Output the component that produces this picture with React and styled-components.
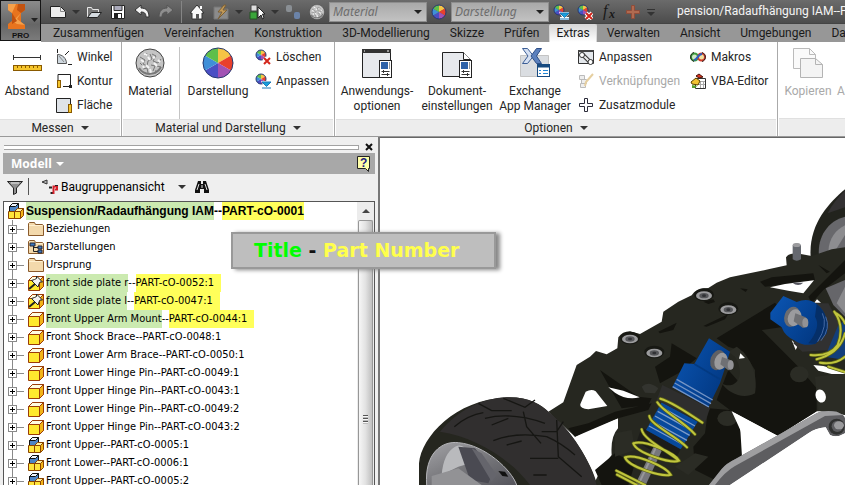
import React from 'react';
import styled, { createGlobalStyle, css } from 'styled-components';

const Global = createGlobalStyle`
  * { box-sizing: border-box; }
  body { margin: 0; font: 12px/15px Roboto, "Liberation Sans", sans-serif; color: #262626; background: #fff; overflow: hidden; }
  button { font: inherit; color: inherit; background: none; border: 0; padding: 0; margin: 0; white-space: nowrap; }
  svg { display: block; flex: none; }
`;

/* ---------- frame ---------- */
const Window = styled.div`
  position: relative;
  display: flex;
  flex-direction: column;
  height: 100vh;
  overflow: hidden;
`;
const Header = styled.header`
  display: flex;
  flex: none;
`;
const AppButton = styled.button`
  flex: none;
  width: 41px;
  height: 41px;
  border: 1px solid #151515;
  background: linear-gradient(#8b8b8b, #666 60%, #7b7b7b);
`;
const HeaderRows = styled.div`
  flex: 1;
  min-width: 0;
  background: #979797;
`;
const QuickBar = styled.div`
  display: flex;
  align-items: center;
  height: 24px;
  padding-left: 5px;
  overflow: hidden;
  background: linear-gradient(#6b6b6b, #4c4c4c);
  border-bottom: 1px solid #444;
`;
const QuickButton = styled.button`
  flex: none;
  display: grid;
  place-items: center;
  width: ${p => (p.$narrow ? 12 : 24)}px;
  height: 22px;
`;
const QuickRule = styled.span`
  flex: none;
  width: 1px;
  height: 22px;
  margin: 0 3px;
  background: #858585;
`;
const Caret = styled.span`
  display: inline-block;
  flex: none;
  border: 4px solid transparent;
  border-top-color: ${p => p.$color || '#333'};
  border-bottom-width: 0;
`;
const Combo = styled.span`
  flex: none;
  display: grid;
  align-items: center;
  width: 98px;
  height: 20px;
  border: 1px solid #8e8e8e;
  background: linear-gradient(#a9a9a9, #c2c2c2);
  &::after {
    content: "";
    grid-area: 1 / 1;
    justify-self: end;
    margin-right: 4px;
    border: 4px solid transparent;
    border-top-color: #222;
    border-bottom-width: 0;
    pointer-events: none;
  }
`;
const ComboSelect = styled.select`
  grid-area: 1 / 1;
  appearance: none;
  width: 100%;
  border: 0;
  padding: 0 3px;
  background: none;
  font: italic 12px/16px "Noto Sans", sans-serif;
  color: #6d6d6d;
`;
const DocTitle = styled.div`
  flex: 1;
  min-width: 0;
  margin-left: 20px;
  overflow: hidden;
  white-space: nowrap;
  color: #f4f4f4;
`;
const Tabs = styled.nav`
  display: flex;
  height: 18px;
  padding-left: 2px;
  overflow: hidden;
  background: #979797;
`;
const Tab = styled.button`
  flex: none;
  height: 18px;
  padding: 0 10px;
  color: #1a1a1a;
  ${p => p.$active && css`
    padding: 0 6px;
    background: linear-gradient(#d8d8d8, #fff);
    border: 1px solid #d8d8d8;
    border-bottom: 0;
    border-radius: 2px 2px 0 0;
  `}
`;

/* ---------- ribbon ---------- */
const Ribbon = styled.div`
  display: flex;
  flex: none;
  height: 95px;
  overflow: hidden;
  border-bottom: 1px solid #999;
`;
const Panel = styled.section`
  display: flex;
  flex-direction: column;
  flex: none;
  min-width: ${p => p.$min || 0}px;
  border-right: 1px solid #aaa;
  margin-right: 1px;
`;
const PanelBody = styled.div`
  flex: 1;
  display: flex;
  padding: 5px 4px 0 1px;
`;
const PanelTitle = styled.button`
  display: flex;
  align-items: center;
  justify-content: center;
  gap: 7px;
  height: 18px;
  margin-right: 1px;
  background: #ededed;
  border-top: 1px solid #e0e0e0;
`;
const BigButton = styled.button`
  display: flex;
  flex-direction: column;
  align-items: center;
  flex: none;
  width: ${p => p.$w}px;
  color: ${p => (p.$off ? '#a9a9a9' : 'inherit')};
  svg { height: 32px; margin-bottom: 5px; }
`;
const Stack = styled.div`
  display: flex;
  flex-direction: column;
  margin-left: ${p => p.$gap || 3}px;
`;
const SmallButton = styled.button`
  display: flex;
  align-items: center;
  gap: 5px;
  height: 24px;
  padding-bottom: 4px;
  color: ${p => (p.$off ? '#a9a9a9' : 'inherit')};
`;
const BodyRule = styled.span`
  width: 1px;
  height: 72px;
  margin: 0 4px 0 3px;
  background: #c4c4c4;
`;

/* ---------- browser ---------- */
const Body = styled.div`
  flex: 1;
  display: flex;
  min-height: 0;
`;
const Browser = styled.aside`
  display: flex;
  flex-direction: column;
  flex: none;
  width: 380px;
  padding: 4px 3px 0;
  background: #efefef;
  border-right: 2px solid #777;
  font-family: "DejaVu Sans Condensed", "DejaVu Sans", sans-serif;
  font-size: 11px;
`;
const GripRow = styled.div`
  display: flex;
  align-items: center;
  justify-content: space-between;
  height: 12px;
  padding: 0 2px 0 1px;
`;
const Grip = styled.span`
  flex: 1;
  height: 5px;
  margin-right: 6px;
  border: 1px solid #a2a2a2;
  border-left: 0;
  background: #fff;
`;
const BrowserTitle = styled.div`
  display: flex;
  align-items: center;
  justify-content: space-between;
  flex: none;
  height: 21px;
  padding: 0 4px 0 8px;
  background: #a8a8a8;
  color: #fff;
`;
const TitleButton = styled.button`
  display: flex;
  align-items: center;
  gap: 4px;
  font: bold 12px/16px "Noto Sans", sans-serif;
`;
const BrowserTools = styled.div`
  display: flex;
  align-items: center;
  flex: none;
  height: 27px;
  padding-left: 4px;
  padding-bottom: 2px;
`;
const ToolRule = styled.span`
  width: 1px;
  height: 17px;
  margin: 0 13px 0 5px;
  background: #555;
`;
const ViewButton = styled.button`
  display: flex;
  align-items: center;
  gap: 3px;
  margin-right: 8px;
  font: 12px/16px Roboto, sans-serif;
  color: #000;
  ${Caret} { margin-left: 10px; }
`;
const TreeBox = styled.div`
  flex: 1;
  display: flex;
  min-height: 0;
  background: #fff;
  border: 1px solid #555;
  border-bottom: 0;
`;
const Tree = styled.ul`
  flex: 1;
  margin: 0;
  padding: 0;
  list-style: none;
  overflow: hidden;
`;
const Row = styled.li`
  display: flex;
  align-items: center;
  height: 18px;
  white-space: nowrap;
  color: #000;
  ${p => p.$root && css`font: bold 12px/18px "Liberation Sans", sans-serif; padding-left: 4px;`}
`;
const Branch = styled.span`
  flex: none;
  display: flex;
  align-items: center;
  width: 24px;
  height: 18px;
  padding-left: 4px;
  background:
    linear-gradient(#8a8a8a, #8a8a8a) 8px 0 / 1px 100% no-repeat,
    linear-gradient(#8a8a8a, #8a8a8a) 8px 9px / 12px 1px no-repeat;
`;
const Expander = styled.button`
  width: 9px;
  height: 9px;
  border: 1px solid #8a8a8a;
  background:
    linear-gradient(#000, #000) center / 5px 1px no-repeat,
    linear-gradient(#000, #000) center / 1px 5px no-repeat,
    #fff;
`;
const Label = styled.span`
  padding-left: 2px;
  line-height: 18px;
`;
const Mark = styled.mark`
  display: inline-block;
  height: 18px;
  padding-right: ${p => (p.$tail ? 7 : 0)}px;
  color: #000;
  background: ${p => (p.$tail ? '#ffff5a' : '#cbeab0')};
  ${Row}:first-child & { padding-right: 0; }
`;
const Scrollbar = styled.div`
  display: flex;
  flex-direction: column;
  flex: none;
  width: 17px;
  background: #ececec;
`;
const ScrollUp = styled.button`
  display: grid;
  place-items: center;
  height: 18px;
  &::before { content: ""; border: 4px solid transparent; border-bottom-color: #444; border-top-width: 0; }
`;
const Thumb = styled.div`
  flex: 1;
  margin: 0 1px;
  padding: 194px 3px 0;
  border: 1px solid #979797;
  border-bottom: 0;
  border-radius: 2px 2px 0 0;
  background: linear-gradient(90deg, #f6f6f6, #e2e2e2 50%, #bfbfbf);
  &::before {
    content: "";
    display: block;
    height: 9px;
    margin: 0 1px;
    background: repeating-linear-gradient(#555 0 1px, #f8f8f8 1px 2px, #bbb 2px 3px);
  }
`;

/* ---------- viewport ---------- */
const Viewport = styled.main`
  flex: 1;
  min-width: 0;
  overflow: hidden;
  border-top: 1px solid #666;
  background: #fff;
`;
const Callout = styled.div`
  position: absolute;
  left: 231px;
  top: 232px;
  padding: 4px 35px 4px 21px;
  border: 2px solid #999;
  background: #bebebe;
  box-shadow: 4px 1px 4px #888;
  font: bold 19px/25px "DejaVu Sans", sans-serif;
  white-space: nowrap;
  color: #111;
`;
const Key = styled.span`color: ${p => p.$color};`;

/* ---------- icons ---------- */
const Icon = ({ s = 16, h, vb, children }) => (
  <svg width={s} height={h || s} viewBox={vb || `0 0 ${s} ${h || s}`} fill="none" aria-hidden="true">{children}</svg>
);
const SLICES = ['#f6c445', '#e9402c', '#a252b4', '#4a4fc4', '#3f8fd8', '#5fbf4a'];
const Wheel = ({ c, r }) => {
  const pt = a => `${c + r * Math.sin(a)} ${c - r * Math.cos(a)}`;
  return (
    <g>
      {SLICES.map((f, i) => (
        <path key={f} fill={f} d={`M${c} ${c}L${pt(((i + 0.5) * Math.PI) / 3 - Math.PI / 6)}A${r} ${r} 0 0 1 ${pt(((i + 1.5) * Math.PI) / 3 - Math.PI / 6)}Z`} />
      ))}
      <circle cx={c} cy={c} r={r} stroke="#27386e" />
    </g>
  );
};
const WheelIcon = ({ s = 16 }) => <Icon s={s}><Wheel c={s / 2} r={s / 2 - 1} /></Icon>;
const WheelClear = () => <Icon><Wheel c={6} r={5} /><path d="M9 9l6 6M15 9l-6 6" stroke="#fff" strokeWidth="4" /><path d="M9 9l6 6M15 9l-6 6" stroke="#d3261c" strokeWidth="2" /></Icon>;
const WheelAdjust = () => <Icon><Wheel c={6} r={5} /><path d="M6 8h10v2l-3 3h3v3H7v-3h2z" fill="#fff" /><path d="M7 9h9l-4.500 4.500z" fill="#18a0dc" stroke="#1878b8" /><path d="M7 15h9" stroke="#1878b8" /></Icon>;
const Sphere = ({ s = 30 }) => (
  <Icon s={s} vb="0 0 30 30">
    <circle cx="15" cy="15" r="14" fill="#c4c4c4" stroke="#444" />
    <path d="M5 9l5 3-2 4 4 2 1-5 4-2-2-5M8 21l4-1 1 5M17 6l4 2-3 5 5 2 3-4M16 17l4 1-2 5M22 18l4 1M5 15l2 2M21 22l-1 4M12 5l-2 3" stroke="#777" />
    <path d="M6 12l3 2M13 9l2 3M18 9l2 1M19 15l3 3M11 17l3 3M9 6l3 1M15 21l1 4M23 12l2 2M8 18l1 2" stroke="#f4f4f4" strokeWidth="2" />
    <path d="M4 20c5 8 17 8 22-1" stroke="#777" strokeWidth="2" />
  </Icon>
);
const Logo = () => (
  <Icon s={39}>
    <path d="M7 3h17v6l-4 3v9l4 3v4H7v-5l4-3v-8L7 9z" fill="#e8741e" />
    <path d="M7 3h8l-4 9-4-3zM20 12l-4 6 4 3 4 3-8-1-5-3 4-3z" fill="#f5a04a" /><path d="M17 3h7v6l-4 3-4-3zM11 12l5 8-5 3z" fill="#c2520f" />
    <path d="M30 17h7l-3.500 4z" fill="#222" />
    <text x="11" y="37" fontSize="8" fontWeight="bold" fontFamily="Liberation Sans" fill="#111">PRO</text>
  </Icon>
);
const NewIcon = () => <Icon><path d="M.5 2.500h10l5 5v6H.5z" fill="#eee" stroke="#222" /><path d="M10.500 2.500v5h5" stroke="#888" /></Icon>;
const OpenIcon = () => <Icon><path d="M1.500 13V3.500h4l1 2h6v3" stroke="#e8e8e8" fill="#777" /><path d="M1.500 13.500l4-5h10l-4 5z" fill="#d5dbe0" stroke="#222" /></Icon>;
const SaveIcon = () => <Icon><path d="M1.500 1.500h13v13h-13z" fill="#fff" stroke="#222" /><path d="M4 1.500h8v5H4z" fill="#aab" stroke="#333" /><path d="M4 9h8v6H4z" fill="#222" /><path d="M8 10h3v4H8z" fill="#fff" /></Icon>;
const UndoIcon = () => <Icon><path d="M1 6l6-5v3c5 0 8 3 8 9h-3c0-4-2-5-5-5v3z" fill="#f4f4f4" stroke="#333" /></Icon>;
const RedoIcon = () => <Icon><path d="M15 6L9 1v3c-5 0-8 3-8 9h3c0-4 2-5 5-5v3z" fill="#8e8e8e" stroke="#555" /></Icon>;
const HomeIcon = () => <Icon><path d="M1 9l7-8 7 8h-2v6H3V9z" fill="#f8f8f8" stroke="#333" /><path d="M7 10h3v5H7z" fill="#555" /><path d="M12 2v3" stroke="#fff" strokeWidth="2" /></Icon>;
const UpdateIcon = () => <Icon><path d="M1 3h7l2 2h5v10H1z" fill="#8b8b8b" stroke="#777" /><path d="M11 1L5 8h4l-4 7 9-9h-4l3-5z" fill="#c39a58" stroke="#7a6038" /></Icon>;
const SelectIcon = () => <Icon><path d="M2 1h6v6H2z" fill="#ddd" stroke="#444" /><path d="M1 8h7v7H1z" fill="#3aa53a" stroke="#225522" /><path d="M9 3v11l3-3 1.500 4 1.500-1-1.500-4H16z" fill="#fff" stroke="#222" /></Icon>;
const LinkIcon = () => <Icon><rect x="1" y="1" width="6" height="7" rx="2" fill="#8a8f94" /><rect x="9" y="8" width="6" height="7" rx="2" fill="#6b83a8" /></Icon>;
const DistanceIcon = () => <Icon s={30}><path d="M1 9.500h28M1.500 7v5M28.500 7v5" stroke="#333" /><rect x="1.500" y="17.500" width="28" height="5" fill="#f5c52c" stroke="#8a5a00" /><path d="M5.500 18v2M9.500 18v2M13.500 18v2M17.500 18v2M21.500 18v2M25.500 18v2" stroke="#8a5a00" /></Icon>;
const AngleIcon = () => <Icon><path d="M1.500 0v4M12 15.500h4M9 6l4-4" stroke="#222" /><path d="M1.500 5.500c5 0 9 4 9 9h-9z" fill="#cfd8df" stroke="#555" /><path d="M3 7l5 6" stroke="#888" /></Icon>;
const LoopIcon = () => <Icon><path d="M2 7V1.500h12.500v12H7" stroke="#222" /><rect x="1.500" y="7.500" width="3" height="7" fill="#f5c52c" stroke="#8a5a00" /><rect x="13" y="12" width="3" height="3" fill="#222" /></Icon>;
const AreaIcon = () => <Icon><path d="M.5 1.500h14v14H.5z" fill="#dfe3e8" stroke="#222" /><rect x="12.500" y="7.500" width="3" height="8" fill="#f5c52c" stroke="#8a5a00" /></Icon>;
const OptionSheet = () => (
  <g>
    <rect x="18.500" y="13.500" width="12" height="17" fill="#fff" stroke="#222" /><rect x="20" y="15" width="7" height="7" fill="#2e62a8" /><path d="M28.500 15v7" stroke="#999" />
    <path d="M20.500 24.500h8M20.500 27.500h8" stroke="#333" /><path d="M22.500 23v3M26.500 26v3" stroke="#333" />
  </g>
);
const AppOptionsIcon = () => <Icon s={32}><path d="M1.500 2.500h28v28h-28z" fill="#e7e9ed" stroke="#222" /><path d="M1 2h29v4H1z" fill="#333" /><path d="M3 4h1M26 4h2" stroke="#fff" /><OptionSheet /></Icon>;
const DocOptionsIcon = () => <Icon s={32}><path d="M1.500 5.500h21l7 7v17h-28z" fill="#e7e9ed" stroke="#222" /><path d="M22.500 5.500v7h7" fill="#fff" stroke="#222" /><OptionSheet /></Icon>;
const ExchangeIcon = () => (
  <Icon s={32}>
    <path d="M1.500 8.500h28v21h-28z" fill="#dadde1" stroke="#c4c4c4" />
    <path d="M3.500 1.500h5l6 7.500-6 7.500h-5L9 9z" fill="#d5e0f2" stroke="#3c5e96" /><path d="M22.500 1.500h-5L12 9l5.500 7.500h5L17.500 9z" fill="#5b80bd" stroke="#2e4f87" />
    <rect x="18.500" y="17.500" width="12" height="12" fill="#fff" stroke="#174a80" /><path d="M18 19h13" stroke="#174a80" strokeWidth="3" /><path d="M20 23.500h2M20 26.500h2M24 23.500h5M24 26.500h5" stroke="#2386d6" />
  </Icon>
);
const CustomizeIcon = () => <Icon><path d="M.5 1.500h15v13H.5z" fill="#e4e8ec" stroke="#333" /><path d="M0 2h16" stroke="#444" strokeWidth="2" /><path d="M4 5l8 8" stroke="#333" strokeWidth="4" /><path d="M4 5l8 8" stroke="#eee" strokeWidth="2" /><circle cx="4" cy="6" r="2.500" fill="#fff" stroke="#333" /><circle cx="12.500" cy="13" r="2.500" fill="#fff" stroke="#333" /></Icon>;
const LinksIcon = () => <Icon><path d="M1.500 2.500h5v4h-5zM3.500 6.500h5v4h-5zM2.500 10.500h5v4h-5z" fill="#eee" stroke="#bbb" /><path d="M15 1L8 9l-1 4" stroke="#e6cfa0" strokeWidth="2" /></Icon>;
const PlusIcon = ({ fill = '#fff', stroke = '#2c2c3a' }) => <Icon><path d="M6.500 1.500h3v5h5v3h-5v5h-3v-5h-5v-3h5z" fill={fill} stroke={stroke} /></Icon>;
const MacroIcon = () => <Icon><circle cx="4.500" cy="8" r="3.500" fill="#cfe8c8" stroke="#3c9a3c" strokeWidth="2" /><circle cx="11.500" cy="8" r="3.500" fill="#f0e0a0" stroke="#d23c2c" strokeWidth="2" /><path d="M4 11c3 0 4-6 8-6" stroke="#2c5fc0" strokeWidth="2" /><path d="M4 12.500c-5-2-4-8 0-9M12 3.500c5 2 4 8 0 9" stroke="#222" /></Icon>;
const VbaIcon = () => <Icon><path d="M5.500 5.500h10v10h-10z" fill="#fff" stroke="#333" /><path d="M7 8.500h8M7 11.500h8M10.500 8v7M13.500 8v7" stroke="#aaa" /><path d="M6 3l3-2 4 3-4 1z" fill="#d8321e" stroke="#4a1208" /><path d="M1 9l5-4 4 3-2 4-6-1z" fill="#f2c232" stroke="#5c4200" /><path d="M2 12l5 1-2 2H2z" fill="#58a030" /></Icon>;
const CopyIcon = () => <Icon s={30}><path d="M.5.5h16l6 6v14H.5z" fill="#fafafa" stroke="#bbb" /><path d="M16.500.5v6h6" stroke="#bbb" /><path d="M7.500 10.500h15l7 6v13h-22z" fill="#f4f4f4" stroke="#b4b4b4" /><path d="M22.500 10.500v6h7" stroke="#b4b4b4" /></Icon>;
const FilterIcon = () => <Icon><path d="M.5 2.500h15L9.500 9v5l-3 1.500V9z" fill="#8f8f8f" stroke="#222" /><path d="M4 4h8" stroke="#eee" /></Icon>;
const ViewIcon = () => <Icon><path d="M0 3l5-2v4z" fill="#bbb" stroke="#333" /><path d="M7 8.500h3M8.500 14h3" stroke="#222" strokeWidth="2" /><path d="M11.500 15V7.500H15v3h-2" stroke="#d4202a" strokeWidth="2" /><path d="M13 6.500h3" stroke="#222" /></Icon>;
const BinocularIcon = () => <Icon><path d="M4 2h3v3h2V2h3l3 9v3h-5v-4H6v4H1v-3z" fill="#111" /><path d="M5 5l-2 6M11 5l2 6M8 6v3" stroke="#ddd" /></Icon>;
const HelpIcon = () => <Icon s={14} h={16}><path d="M.5.5h12v12h-1v3l-3-3h-8z" fill="#ffffa8" stroke="#222" /><text x="3" y="11" fontSize="12" fontWeight="bold" fontFamily="Liberation Sans" fill="#1c1c80">?</text></Icon>;
const FolderIcon = ({ views }) => <Icon><path d="M.5 14.500v-12l1-1h5l1 2h7l1 1v10z" fill="#f3d9ac" stroke="#8a5a2c" /><path d="M1 4.500h13" stroke="#fff0d0" />{views && <g><path d="M5.500 6v6.500H10M5.500 8.500H10" stroke="#222" /><path d="M2 4h5v3H2zM10 7h4v3h-4zM10 11h4v3h-4z" fill="#3a78c0" stroke="#223" /></g>}</Icon>;
const Cube = () => <g><path d="M.5 5.500l4-4h11v10l-4 4H.5z" fill="#ffe92e" stroke="#9a3c08" /><path d="M.5 5.500l4-4h11l-4 4z" fill="#fffce0" stroke="#9a3c08" /><path d="M11.500 5.500l4-4v10l-4 4z" fill="#f2b418" stroke="#9a3c08" /></g>;
const PartIcon = () => <Icon><Cube /></Icon>;
const PinnedIcon = () => <Icon><Cube /><path d="M1 14l6-5" stroke="#222" strokeWidth="2" /><path d="M3.500 5.500l3-1 2-1V1l6 6h-2.500l-1 2-1 3z" fill="#f2f2f2" stroke="#222" /></Icon>;
const AssemblyIcon = () => (
  <Icon>
    <path d="M1.500 3.500l3-3h6v5l-3 3h-6z" fill="#4d84c4" stroke="#111" /><path d="M1.500 3.500l3-3h6l-3 3z" fill="#eef6ff" stroke="#111" />
    <path d="M10.500 8.500l2-3h3v7l-3 3" fill="#f2b418" stroke="#8a4400" />
    <path d="M.5 8.500h6v7h-6zM6.500 8.500h6v7h-6z" fill="#ffe53a" stroke="#8a4400" />
    <path d="M6.500 8.500l3-3h6l-3 3z" fill="#fff3a0" stroke="#8a4400" />
  </Icon>
);

/* ---------- suspension model ---------- */
const Bolt = ({ x, y }) => <g><ellipse cx={x} cy={y - 3} rx="30" ry="19" fill="#171813" /><ellipse cx={x} cy={y} rx="24" ry="13" fill="#9c9c9e" /><ellipse cx={x} cy={y} rx="14" ry="8" fill="#56575a" /><ellipse cx={x} cy={y} rx="6" ry="4" fill="#303134" /></g>;
const Coils = ({ d }) => <g fill="none" strokeLinecap="round"><path d={d} stroke="#5b6114" strokeWidth="10" /><path d={d} stroke="#c0c53e" strokeWidth="6" /></g>;
const Model = () => (
  <svg width="100%" height="100%" viewBox="-105 -96 1395 1041" preserveAspectRatio="xMinYMin slice" role="img" aria-label="Suspension">
    <defs>
      <linearGradient id="rim" x1="0" y1="0" x2="1" y2="1"><stop offset="0" stopColor="#a4a4a8" /><stop offset=".5" stopColor="#77777b" /><stop offset="1" stopColor="#55555c" /></linearGradient>
      <linearGradient id="blue" x1="0" y1="0" x2="1" y2=".6"><stop offset="0" stopColor="#0b56b4" /><stop offset="1" stopColor="#023882" /></linearGradient>
    </defs>
    {/* rear wheel */}
    <path d="M1290 58C1240 100 1180 165 1187 262L1215 300L1290 270Z" fill="#22231d" />
    <path d="M1290 62C1268 82 1250 105 1238 130L1290 112Z" fill="#333132" />
    <path d="M1290 140C1240 152 1206 200 1212 258L1290 240Z" fill="#68686c" />
    <path d="M1290 166C1262 180 1242 205 1240 245L1262 240L1290 195Z" fill="#8d8d90" />
    {/* chassis */}
    <path d="M400 725L445 697L485 585L525 560L543 543L575 553L607 535L610 502Q622 484 645 484L675 492L740 455L745 425L790 395L830 376Q840 355 880 354L905 338L945 322L1060 298L1115 286L1113 262Q1120 250 1145 250L1190 258L1250 238L1290 232V735L1265 724L1205 724L1088 797L950 724L968 752L981 800V860L890 945H535L560 895L590 855Q586 800 609 775V744L520 780L480 800Z" fill="#262720" />
    <g fill="#14140f">
      <path d="M905 505L1080 398L1098 418L1108 470L1040 480L1150 590L1205 655V724L1088 797L950 724L905 690L940 600L975 640L1020 665V600L985 545L940 530Z" />
      <path d="M1035 335L1070 322L1195 310L1200 330L1150 338L1050 350Z" />
      <path d="M770 520L845 565L790 610L735 640L720 590L765 560Z" />
      <path d="M730 485L785 458L775 480L735 490ZM865 468L940 432L930 448L875 470ZM865 395L895 388L900 396L880 402ZM975 355L998 358L992 366ZM1210 285L1245 305L1235 310Z" />
      <path d="M555 600L670 680L710 685L700 705L620 715L600 680ZM600 725L710 700L700 720L609 745L480 800L460 775L520 760Z" />
      <path d="M880 715L945 720L968 752L981 800V860L900 930L840 900L835 830L870 790ZM540 900L600 850L660 880L640 945H560Z" />
      <path d="M1180 380L1290 270V310L1225 360L1190 400Z" />
    </g>
    <g fill="#2b2c25">
      <ellipse cx="937" cy="745" rx="30" ry="23" /><ellipse cx="1153" cy="613" rx="28" ry="24" />
      <path d="M920 640C950 660 1000 630 960 560L940 545L965 530C1010 560 1030 620 1020 670C985 690 940 670 920 640Z" />
      <path d="M780 890L840 850L880 860L820 915ZM600 790L650 780L660 840L600 860Z" />
      <path d="M1200 620L1290 610V735L1210 722Z" />
    </g>
    <g fill="#fff">
      <path d="M1065 352L1110 342L1197 331L1165 370L1120 362ZM512 665Q530 655 542 664L577 708L520 718Q490 715 497 700ZM580 652L625 662L674 682Q635 692 600 668Z" />
      <path d="M1195 585L1225 588L1290 606V612L1250 612L1210 602ZM1130 510L1148 528L1142 540ZM1206 388L1218 398H1198ZM976 550L990 564L972 566Z" />
      <ellipse cx="1217" cy="678" rx="15" ry="20" transform="rotate(-20 1217 678)" />
      <path d="M950 724L1088 797L981 860L976 780Z" />
    </g>
    <path d="M1232 355L1290 330V440L1255 405Z" fill="#66666a" /><path d="M1265 400L1290 350V430Z" fill="#8b8b8e" />
    <path d="M1133 268V226Q1145 214 1158 226V268Q1145 276 1133 268Z" fill="#65686f" /><ellipse cx="1145" cy="225" rx="12" ry="6" fill="#9b9b9e" />
    <path d="M1132 338H1165Q1150 352 1132 338Z" fill="#55555f" />
    <Bolt x={867} y={377} /><Bolt x={940} y={419} /><Bolt x={645} y={507} /><Bolt x={718} y={549} />
    <path d="M680 650Q700 630 730 655L720 670L690 668Z" fill="#33342f" />

    {/* front wheel */}
    <path d="M12 945V880C20 800 120 690 275 682C340 680 380 705 400 725C470 780 530 880 547 945Z" fill="#25261f" />
    <path d="M75 785C130 720 200 685 275 682C340 680 380 705 400 725C470 780 525 870 545 945H345C290 870 180 800 75 785Z" fill="#312f2f" />
    <path d="M118 770Q160 735 205 728M210 745Q290 725 390 760M190 700L230 722H290M265 685L330 712L360 690M325 725L335 770L378 820M230 765L280 745M235 812Q300 785 395 800Q440 820 480 855M275 825L320 813M345 865L430 865M425 750L430 860L500 920M355 915H395M380 785L425 785L445 755" stroke="#161613" strokeWidth="4" fill="none" />
    <path d="M35 945C28 850 80 812 130 818C210 825 290 900 305 945Z" fill="url(#rim)" />
    <path d="M120 830C150 815 160 850 165 880L130 890L80 915Q85 850 120 830Z" fill="#b9babd" /><path d="M130 830L180 835L235 905L220 940L165 930Z" fill="#4a4a52" /><path d="M170 835L200 850L245 915L230 935Z" fill="#65656c" /><path d="M50 918L130 895L200 945H50Z" fill="#929295" /><path d="M250 903L270 905L280 920L262 918Z" fill="#111" />
    <path d="M35 945C28 850 80 812 130 818C210 825 290 900 305 945" stroke="#b5b5b9" strokeWidth="3" fill="none" />

    {/* steering link */}
    <path d="M882 945L920 897Q935 880 960 868L1205 730Q1225 720 1265 725Q1290 735 1290 745V790Q1265 805 1245 795L1232 772Q1200 775 1180 790L945 945Z" fill="#5d5d60" />
    <path d="M945 945L1180 790Q1200 775 1232 772L1245 795Q1265 805 1290 790V945Z" fill="#fff" />
    <path d="M882 945L920 897Q935 880 960 868L1205 730Q1225 720 1265 725L1285 735L1230 738L960 888Q930 905 900 945Z" fill="#9e9ea0" />
    <circle cx="1265" cy="770" r="24" fill="#303130" /><circle cx="1267" cy="769" r="17" fill="#5d5d60" /><ellipse cx="1272" cy="766" rx="15" ry="12" fill="#9a9a9c" />

    {/* front damper */}
    <path d="M680 772L797 838L775 880L665 815Z" fill="#1c1c19" />
    <path d="M740 697L848 755L797 838L693 780Z" fill="#07499c" />
    <path d="M736 710L840 768M728 724L832 782M720 738L824 796M710 753L816 811M702 768L806 825" stroke="#7d9cc8" strokeWidth="4" />
    <path d="M742 645L885 715L868 762L725 690Z" fill="#2e2e2d" />
    <path d="M882 505L945 545L928 600L915 640L880 712L772 652L808 580L838 582Z" fill="url(#blue)" />
    <path d="M785 628L893 690M779 639L888 701M773 650L882 711" stroke="#7594c4" strokeWidth="4" />
    <path d="M838 582L915 628" stroke="#033a82" strokeWidth="5" />
    <path d="M715 832Q728 828 740 843L692 945H660Z" fill="#77777b" /><path d="M722 834L672 940" stroke="#97979a" strokeWidth="6" />
    <g transform="translate(916 573)"><ellipse cx="-8" rx="22" ry="31" transform="rotate(20)" fill="#5f6064" /><ellipse cx="2" rx="19" ry="26" transform="rotate(20)" fill="#9a9a9c" /><path d="M5-12L32-2Q44 8 36 24L24 28L0 10Z" fill="#6f7074" /><ellipse cx="31" cy="12" rx="9" ry="14" fill="#929295" /></g>
    <Coils d="M736 686Q770 695 862 758M727 697C740 722 800 750 840 793M703 738C706 765 780 795 816 832M680 778C685 808 750 838 792 872M655 820C690 808 780 850 792 872C770 882 665 850 655 820M630 862C665 850 755 892 767 914C740 922 640 890 630 862M604 902L690 945M606 914L665 945" />

    {/* rear damper */}
    <path d="M1200 400L1240 400L1278 470L1250 540L1162 545L1135 520Z" fill="#313131" />
    <path d="M1105 378L1145 396Q1180 382 1205 402Q1245 435 1235 490L1200 522Q1165 530 1140 512Q1110 500 1100 472L1066 448V428Z" fill="url(#blue)" />
    <path d="M1200 440Q1220 470 1180 520L1200 522L1235 490Q1245 435 1205 402Z" fill="#052f68" />
    <path d="M1222 430Q1240 465 1208 515M1232 440Q1248 475 1218 512" stroke="#4469a5" strokeWidth="3" fill="none" />
    <g transform="translate(1136 442)"><ellipse cx="-5" rx="23" ry="31" fill="#6b6c70" transform="rotate(20)" /><ellipse cx="3" rx="20" ry="26" fill="#9b9b9e" transform="rotate(20)" /><path d="M5-12L36 0Q48 10 40 28L28 32L0 12Z" fill="#6f7074" /><ellipse cx="35" cy="16" rx="9" ry="14" fill="#929295" /></g>
    <path d="M1270 465L1290 450V570L1230 560Z" fill="#123e7b" />
    <Coils d="M1258 425Q1290 470 1268 525Q1245 560 1187 555M1264 430Q1282 440 1290 460M1290 490Q1275 550 1205 568M1215 578Q1260 585 1290 560M1240 590L1290 606" />
  </svg>
);

/* ---------- data ---------- */
const TABS = ['Zusammenfügen', 'Vereinfachen', 'Konstruktion', '3D-Modellierung', 'Skizze', 'Prüfen', 'Extras', 'Verwalten', 'Ansicht', 'Umgebungen', 'Datei'];
const NODES = [
  ['folder', 'Beziehungen'], ['views', 'Darstellungen'], ['folder', 'Ursprung'],
  ['pinned', 'front side plate r', 'PART-cO-0052:1', true], ['pinned', 'front side plate l', 'PART-cO-0047:1', true],
  ['part', 'Front Upper Arm Mount', 'PART-cO-0044:1', true], ['part', 'Front Shock Brace', 'PART-cO-0048:1'],
  ['part', 'Front Lower Arm Brace', 'PART-cO-0050:1'], ['part', 'Front Lower Hinge Pin', 'PART-cO-0049:1'],
  ['part', 'Front Upper Hinge Pin', 'PART-cO-0043:1'], ['part', 'Front Lower Hinge Pin', 'PART-cO-0049:2'],
  ['part', 'Front Upper Hinge Pin', 'PART-cO-0043:2'], ['assembly', 'Front Upper', 'PART-cO-0005:1'],
  ['assembly', 'Front Lower', 'PART-cO-0006:1'], ['assembly', 'Front Upper', 'PART-cO-0005:2'],
];
const NODE_ICONS = { folder: <FolderIcon />, views: <FolderIcon views />, pinned: <PinnedIcon />, part: <PartIcon />, assembly: <AssemblyIcon /> };

const Small = ({ icon, children, off }) => <SmallButton $off={off} disabled={off}>{icon}{children}</SmallButton>;
const Quick = ({ label, children, narrow }) => <QuickButton $narrow={narrow} aria-label={label}>{children}</QuickButton>;
const NodeText = ({ title, number, marked }) => (
  <Label>
    {marked ? <Mark>{title}</Mark> : title}
    {number && '--'}
    {marked ? <Mark $tail>{number}</Mark> : number}
  </Label>
);

export default function App() {
  return (
    <Window>
      <Global />
      <Header>
        <AppButton aria-label="Anwendungsmenü"><Logo /></AppButton>
        <HeaderRows>
          <QuickBar>
            <Quick label="Neu"><NewIcon /></Quick>
            <Quick label="Neu Menü" narrow><Caret /></Quick>
            <Quick label="Öffnen"><OpenIcon /></Quick>
            <Quick label="Speichern"><SaveIcon /></Quick>
            <Quick label="Rückgängig"><UndoIcon /></Quick>
            <Quick label="Wiederherstellen"><RedoIcon /></Quick>
            <QuickRule />
            <Quick label="Startansicht"><HomeIcon /></Quick>
            <Quick label="Aktualisieren"><UpdateIcon /></Quick>
            <Quick label="Aktualisieren Menü" narrow><Caret /></Quick>
            <Quick label="Auswahl"><SelectIcon /></Quick>
            <Quick label="Auswahl Menü" narrow><Caret /></Quick>
            <Quick label="Verknüpfen"><LinkIcon /></Quick>
            <Quick label="Material"><Sphere s={16} /></Quick>
            <Combo><ComboSelect aria-label="Material"><option>Material</option></ComboSelect></Combo>
            <Quick label="Darstellung"><WheelIcon /></Quick>
            <Combo><ComboSelect aria-label="Darstellung"><option>Darstellung</option></ComboSelect></Combo>
            <Quick label="Anpassen"><WheelAdjust /></Quick>
            <Quick label="Löschen"><WheelClear /></Quick>
            <Quick label="Parameter">
              <Icon><text x="2" y="12" fontSize="16" fontStyle="italic" fontFamily="Liberation Serif" fill="#181818">f</text><text x="8" y="14" fontSize="12" fontWeight="bold" fontStyle="italic" fontFamily="Liberation Serif" fill="#181818">x</text></Icon>
            </Quick>
            <Quick label="Hinzufügen"><PlusIcon fill="#b06a50" stroke="#8f4d3a" /></Quick>
            <Quick label="Anpassen Menü" narrow><Icon s={8}><path d="M0 1.500h8" stroke="#333" /><path d="M0 4h8l-4 4z" fill="#333" /></Icon></Quick>
            <DocTitle>pension/Radaufhängung IAM--PART-cO-0001</DocTitle>
          </QuickBar>
          <Tabs>{TABS.map(t => <Tab key={t} $active={t === 'Extras'}>{t}</Tab>)}</Tabs>
        </HeaderRows>
      </Header>

      <Ribbon>
        <Panel $min={122}>
          <PanelBody>
            <BigButton $w={52}><DistanceIcon />Abstand</BigButton>
            <Stack>
              <Small icon={<AngleIcon />}>Winkel</Small>
              <Small icon={<LoopIcon />}>Kontur</Small>
              <Small icon={<AreaIcon />}>Fläche</Small>
            </Stack>
          </PanelBody>
          <PanelTitle>Messen<Caret /></PanelTitle>
        </Panel>
        <Panel $min={212}>
          <PanelBody>
            <BigButton $w={52}><Sphere />Material</BigButton>
            <BodyRule />
            <BigButton $w={68}><WheelIcon s={32} />Darstellung</BigButton>
            <Stack>
              <Small icon={<WheelClear />}>Löschen</Small>
              <Small icon={<WheelAdjust />}>Anpassen</Small>
            </Stack>
          </PanelBody>
          <PanelTitle>Material und Darstellung<Caret /></PanelTitle>
        </Panel>
        <Panel $min={442}>
          <PanelBody>
            <BigButton $w={80}><AppOptionsIcon />Anwendungs-<br />optionen</BigButton>
            <BigButton $w={80}><DocOptionsIcon />Dokument-<br />einstellungen</BigButton>
            <BigButton $w={76}><ExchangeIcon />Exchange<br />App Manager</BigButton>
            <Stack $gap={5}>
              <Small icon={<CustomizeIcon />}>Anpassen</Small>
              <Small icon={<LinksIcon />} off>Verknüpfungen</Small>
              <Small icon={<PlusIcon />}>Zusatzmodule</Small>
            </Stack>
            <Stack $gap={10}>
              <Small icon={<MacroIcon />}>Makros</Small>
              <Small icon={<VbaIcon />}>VBA-Editor</Small>
            </Stack>
          </PanelBody>
          <PanelTitle>Optionen<Caret /></PanelTitle>
        </Panel>
        <Panel $min={160}>
          <PanelBody>
            <BigButton $w={56} $off><CopyIcon />Kopieren</BigButton>
            <BigButton $w={56} $off>
              <Icon s={30} />Anhängen
            </BigButton>
          </PanelBody>
          <PanelTitle aria-label="Inhalt" />
        </Panel>
      </Ribbon>

      <Body>
        <Browser>
          <GripRow>
            <Grip />
            <button aria-label="Schließen"><Icon s={8}><path d="M1 1l6 6M7 1L1 7" stroke="#111" strokeWidth="2" /></Icon></button>
          </GripRow>
          <BrowserTitle>
            <TitleButton>Modell<Caret $color="#fff" /></TitleButton>
            <button aria-label="Hilfe"><HelpIcon /></button>
          </BrowserTitle>
          <BrowserTools>
            <button aria-label="Filter"><FilterIcon /></button>
            <ToolRule />
            <ViewButton><ViewIcon />Baugruppenansicht<Caret /></ViewButton>
            <button aria-label="Suchen"><BinocularIcon /></button>
          </BrowserTools>
          <TreeBox>
            <Tree>
              <Row $root><AssemblyIcon /><NodeText title="Suspension/Radaufhängung IAM" number="PART-cO-0001" marked /></Row>
              {NODES.map(([kind, title, number, marked], i) => (
                <Row key={i}>
                  <Branch><Expander aria-label={`${title} erweitern`} /></Branch>
                  {NODE_ICONS[kind]}
                  <NodeText title={title} number={number} marked={marked} />
                </Row>
              ))}
            </Tree>
            <Scrollbar><ScrollUp aria-label="Nach oben" /><Thumb /></Scrollbar>
          </TreeBox>
        </Browser>
        <Viewport><Model /></Viewport>
      </Body>
      <Callout><Key $color="#0f0">Title</Key> - <Key $color="#ffff4c">Part Number</Key></Callout>
    </Window>
  );
}
